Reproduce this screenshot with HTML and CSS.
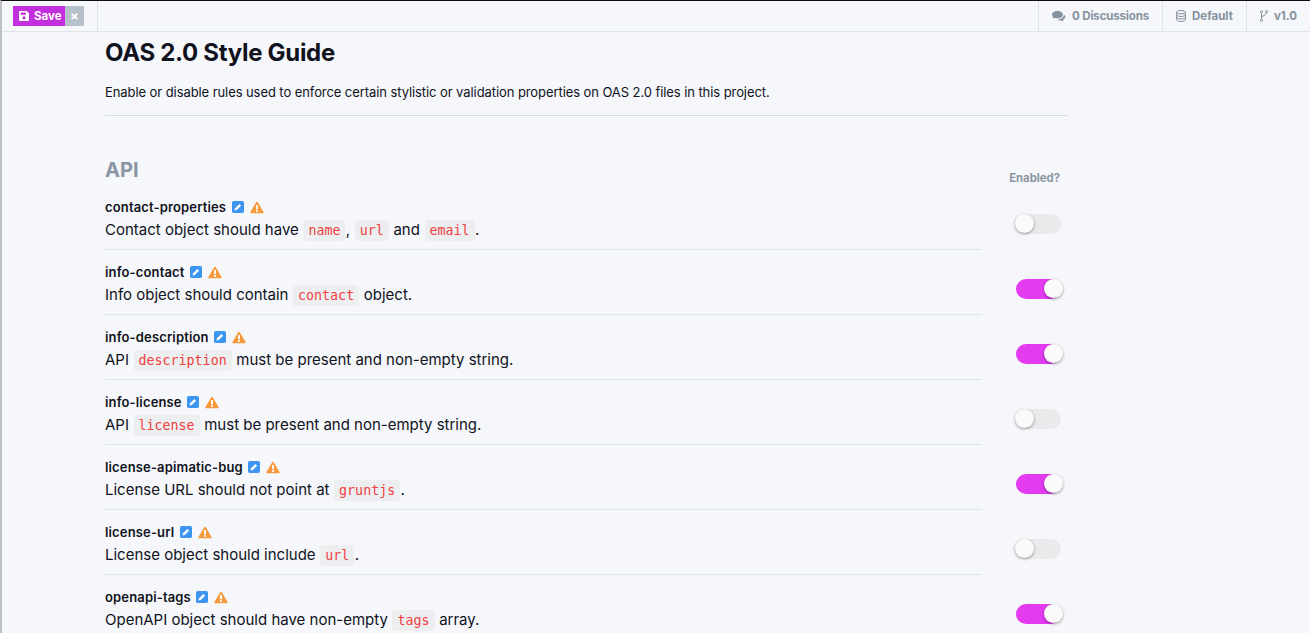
FILE: index.html
```html
<!DOCTYPE html>
<html lang="en">
<head>
    <meta charset="UTF-8">
    <title>OAS 2.0 Style Guide</title>
    <link rel="stylesheet" href="styles.css">
</head>
<body>
    <svg class="defs" width="0" height="0">
        <symbol id="edit" viewBox="0 0 14 14">
            <rect width="14" height="14" rx="2" fill="#3d95f2"/>
            <path d="M3 11l.6-2.600 5-5 2 2-5 5z" fill="#fff"/>
        </symbol>
        <symbol id="warn" viewBox="0 0 16 14">
            <path d="M8 .5c.5 0 .9.3 1.100.7l6.400 10.900c.4.7-.1 1.600-1 1.600H1.500c-.9 0-1.400-.9-1-1.600L6.900 1.200C7.100.8 7.500.5 8 .5z" fill="#f79a3e"/>
            <rect x="6.900" y="4.200" width="2.200" height="4.800" fill="#fff"/>
            <rect x="6.900" y="10" width="2.200" height="2" fill="#fff"/>
        </symbol>
    </svg>

    <header class="topbar">
        <div class="topbar-left">
            <div class="save-group">
                <button class="save-btn">
                    <svg width="10" height="10" viewBox="0 0 11 11"><path d="M1.500 0H8.500L11 2.500V9.500A1.500 1.500 0 0 1 9.500 11H1.500A1.500 1.500 0 0 1 0 9.500V1.500A1.500 1.500 0 0 1 1.500 0zM2 1.700V4H7.500V1.700zM5.500 5.800A1.700 1.700 0 1 0 5.500 9.200A1.700 1.700 0 1 0 5.500 5.800z" fill="#fff" fill-rule="evenodd"/></svg>
                    Save
                </button>
                <button class="close-btn">×</button>
            </div>
        </div>
        <nav class="topbar-right">
            <a class="top-link discussions">
                <svg width="14" height="11" viewBox="0 0 14 11"><path d="M5.500 0C2.500 0 0 1.600 0 3.700c0 .9.500 1.700 1.200 2.300-.2.600-.6 1.100-1 1.500 1 0 1.800-.4 2.400-.8.900.4 1.900.6 2.900.6 3 0 5.500-1.600 5.500-3.600S8.500 0 5.500 0z" fill="#85919e"/><path d="M12 3.700c.100 2.500-2.700 4.600-6.200 4.700.9 1 2.300 1.300 3.700 1.200.6.400 1.400.8 2.400.8-.4-.4-.8-.9-1-1.500 3-1.700 3.200-3.900 1.100-5.200z" fill="#85919e"/></svg>
                0 Discussions
            </a>
            <a class="top-link">
                <svg width="10" height="12" viewBox="0 0 10 12"><g fill="none" stroke="#85919e" stroke-width="1"><ellipse cx="5" cy="2.200" rx="4.400" ry="1.700"/><path d="M.6 2.200v7.600c0 .9 2 1.700 4.400 1.700s4.400-.8 4.400-1.700V2.200M.6 4.800c0 .9 2 1.700 4.400 1.700s4.400-.8 4.400-1.700M.6 7.300c0 .9 2 1.700 4.400 1.700s4.400-.8 4.400-1.700"/></g></svg>
                Default
            </a>
            <a class="top-link">
                <svg width="8" height="12" viewBox="0 0 8 12"><g fill="none" stroke="#85919e" stroke-width="1"><circle cx="1.500" cy="1.700" r="1.100"/><circle cx="1.500" cy="10.300" r="1.100"/><circle cx="6.500" cy="1.700" r="1.100"/><path d="M1.500 2.800v6.400M6.500 2.800c0 3-5 2.500-5 5"/></g></svg>
                v1.0
            </a>
        </nav>
    </header>

    <main class="content">
        <h1 class="page-title">OAS 2.0 Style Guide</h1>
        <p class="page-intro">Enable or disable rules used to enforce certain stylistic or validation properties on OAS 2.0 files in this project.</p>

        <div class="section-head">
            <h2 class="section-title">API</h2>
            <div class="enabled-label">Enabled?</div>
        </div>

        <div class="rule">
            <div class="rule-name">contact-properties <svg class="ic-edit"><use href="#edit"/></svg><svg class="ic-warn"><use href="#warn"/></svg></div>
            <div class="rule-desc">Contact object should have <code>name</code>, <code>url</code> and <code>email</code>.</div>
            <div class="toggle"></div>
        </div>
        <div class="rule">
            <div class="rule-name">info-contact <svg class="ic-edit"><use href="#edit"/></svg><svg class="ic-warn"><use href="#warn"/></svg></div>
            <div class="rule-desc">Info object should contain <code>contact</code> object.</div>
            <div class="toggle on"></div>
        </div>
        <div class="rule">
            <div class="rule-name">info-description <svg class="ic-edit"><use href="#edit"/></svg><svg class="ic-warn"><use href="#warn"/></svg></div>
            <div class="rule-desc">API <code>description</code> must be present and non-empty string.</div>
            <div class="toggle on"></div>
        </div>
        <div class="rule">
            <div class="rule-name">info-license <svg class="ic-edit"><use href="#edit"/></svg><svg class="ic-warn"><use href="#warn"/></svg></div>
            <div class="rule-desc">API <code>license</code> must be present and non-empty string.</div>
            <div class="toggle"></div>
        </div>
        <div class="rule">
            <div class="rule-name">license-apimatic-bug <svg class="ic-edit"><use href="#edit"/></svg><svg class="ic-warn"><use href="#warn"/></svg></div>
            <div class="rule-desc">License URL should not point at <code>gruntjs</code>.</div>
            <div class="toggle on"></div>
        </div>
        <div class="rule">
            <div class="rule-name">license-url <svg class="ic-edit"><use href="#edit"/></svg><svg class="ic-warn"><use href="#warn"/></svg></div>
            <div class="rule-desc">License object should include <code>url</code>.</div>
            <div class="toggle"></div>
        </div>
        <div class="rule">
            <div class="rule-name">openapi-tags <svg class="ic-edit"><use href="#edit"/></svg><svg class="ic-warn"><use href="#warn"/></svg></div>
            <div class="rule-desc">OpenAPI object should have non-empty <code>tags</code> array.</div>
            <div class="toggle on"></div>
        </div>
    </main>
</body>
</html>
```

FILE: styles.css
```css
html, body {
    height: 100%;
    overflow: hidden;
}
body {
    margin: 0;
    background: #f5f7fa;
    border-top: 1px solid #111;
    border-left: 2px solid #bcbfc3;
    font-family: Inter, "Noto Sans", sans-serif;
    color: #10121d;
}
.defs {
    position: absolute;
}
.topbar {
    display: flex;
    justify-content: space-between;
    height: 30px;
    border-bottom: 1px solid #dfe4ea;
}
.topbar-left {
    width: 84px;
    padding: 5px 0 0 11px;
    border-right: 1px solid #dfe4ea;
}
.save-group {
    display: flex;
    height: 20px;
}
.save-btn, .close-btn {
    border: none;
    padding: 0;
    color: #fff;
    font-family: inherit;
    font-weight: 700;
    font-size: 11.500px;
}
.save-btn {
    display: flex;
    align-items: center;
    gap: 5px;
    width: 52px;
    padding-left: 6px;
    background: #c22fdc;
}
.close-btn {
    width: 19px;
    background: #b6c0cb;
    font-size: 13px;
}
.topbar-right {
    display: flex;
}
.top-link {
    display: flex;
    align-items: center;
    gap: 6px;
    padding: 0 13px;
    border-left: 1px solid #dfe4ea;
    color: #85919e;
    font-size: 11.500px;
    font-weight: 700;
}
.discussions {
    letter-spacing: -0.15px;
}
.content {
    width: 962px;
    margin-left: 103px;
}
.page-title {
    margin: 6px 0 0;
    font-size: 24px;
    line-height: 29px;
    font-weight: 700;
    letter-spacing: -0.3px;
}
.page-intro {
    margin: 16px 0 0;
    padding-bottom: 14px;
    border-bottom: 1px solid #d5dbe1;
    font-size: 13px;
    line-height: 18px;
    letter-spacing: -0.08px;
}
.section-head {
    display: flex;
    justify-content: space-between;
    margin-top: 41px;
}
.section-title {
    margin: 0;
    color: #8a96a3;
    font-size: 20px;
    line-height: 26px;
    font-weight: 700;
}
.enabled-label {
    margin: 14px 7px 0 0;
    color: #8a96a3;
    font-size: 11.300px;
    line-height: 14px;
    font-weight: 700;
}
.rule {
    position: relative;
    width: 877px;
    height: 51px;
    padding-top: 13px;
    border-bottom: 1px solid #dfe4ea;
}
.rule:last-child {
    border-bottom: none;
}
.rule-name {
    display: flex;
    align-items: center;
    height: 18px;
    font-size: 13px;
    letter-spacing: 0.15px;
    font-weight: 600;
    white-space: pre;
}
.ic-edit {
    width: 12px;
    height: 12px;
    margin-left: 2px;
}
.ic-warn {
    width: 14px;
    height: 13px;
    margin-left: 6px;
}
.rule-desc {
    margin-top: 2px;
    font-size: 15px;
    line-height: 24px;
}
code {
    display: inline-block;
    margin: 0 0.4px;
    padding: 0 5px;
    background: #eceef0;
    border-radius: 3px;
    color: #f0413f;
    font-family: "DejaVu Sans Mono", monospace;
    font-size: 13.300px;
    line-height: 21px;
}
.toggle {
    position: absolute;
    top: 29px;
    left: 911px;
    width: 45px;
    height: 20px;
    border-radius: 10px;
    background: #e9eaec;
}
.toggle::after {
    content: "";
    position: absolute;
    top: 0;
    left: -1px;
    width: 19px;
    height: 19px;
    border-radius: 50%;
    background: #fafafa;
    box-shadow: 0 1px 3px rgba(0, 0, 0, 0.4);
}
.toggle.on {
    background: #e23bf0;
}
.toggle.on::after {
    left: 28px;
}
```
